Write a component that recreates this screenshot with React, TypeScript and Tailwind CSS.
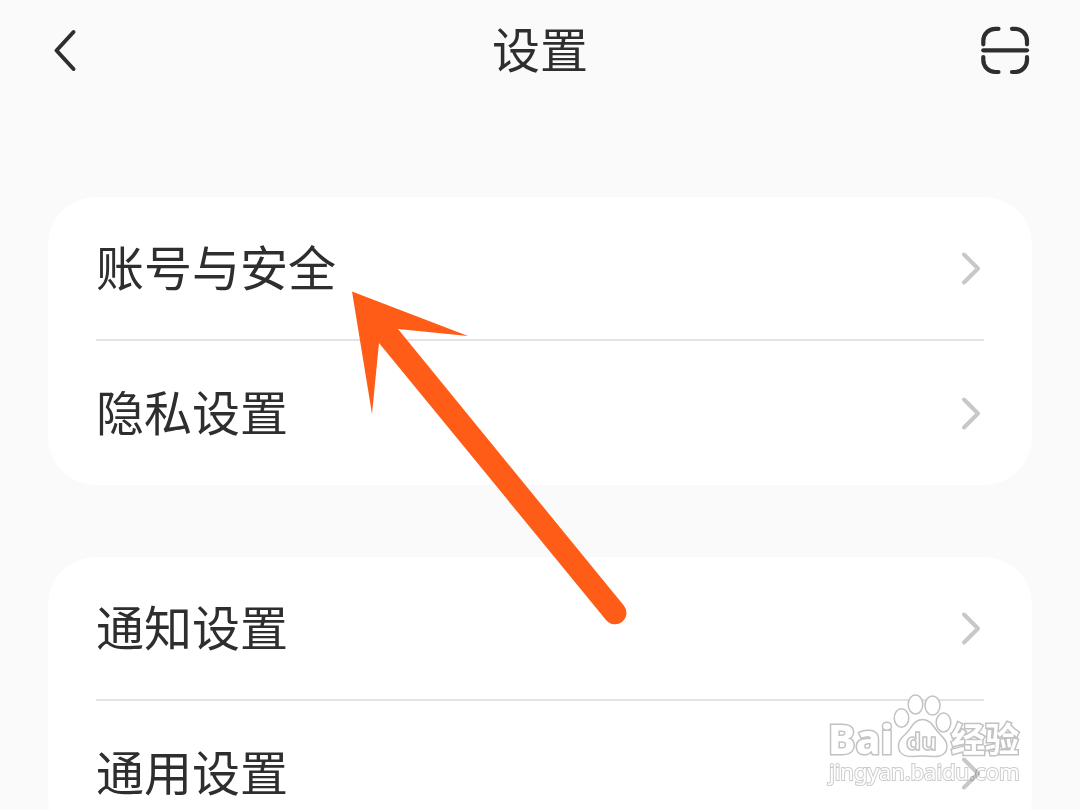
import { clsx } from "clsx";

interface SettingItem {
	id: string;
	label: string;
}

const groups: SettingItem[][] = [
	[
		{ id: "account", label: "账号与安全" },
		{ id: "privacy", label: "隐私设置" },
	],
	[
		{ id: "notice", label: "通知设置" },
		{ id: "general", label: "通用设置" },
	],
];

function ChevronRight() {
	return (
		<svg
			className="h-9 w-6 shrink-0"
			viewBox="0 0 24 36"
			fill="none"
			stroke="#c8c8c8"
			strokeWidth="4"
			strokeLinecap="round"
			strokeLinejoin="round"
			aria-hidden="true"
		>
			<path d="M4 4.500 18 18.500 4 32.500" />
		</svg>
	);
}

function Header() {
	return (
		<header className="flex h-25 items-center justify-between px-12 text-[#2e2e2e]">
			<button type="button" aria-label="返回" className="h-12 w-12">
				<svg
					className="h-12 w-12"
					viewBox="0 0 48 48"
					fill="none"
					stroke="currentColor"
					strokeWidth="4"
					strokeLinecap="round"
					strokeLinejoin="round"
					aria-hidden="true"
				>
					<path d="M25.5 6 8.5 24.5 25.5 43" />
				</svg>
			</button>
			<h1 className="pb-1.5 text-5xl">设置</h1>
			<button type="button" aria-label="扫一扫" className="h-12 w-12">
				<svg
					className="h-12 w-12 overflow-visible"
					viewBox="0 0 48 48"
					fill="none"
					stroke="currentColor"
					strokeWidth="4.2"
					strokeLinecap="round"
					aria-hidden="true"
				>
					<path d="M-.7 18.3V14.8A12 12 0 0 1 11.3 2.8H14.5" />
					<path d="M28 2.8H31A12 12 0 0 1 43 14.8V18.3" />
					<path d="M-.7 31V34A12 12 0 0 0 11.3 46H14.5" />
					<path d="M28 46H31A12 12 0 0 0 43 34V31" />
					<path d="M-.7 24.3H43" />
				</svg>
			</button>
		</header>
	);
}

function SettingGroup({ items }: { items: SettingItem[] }) {
	return (
		<ul className="rounded-[48px] bg-white px-12">
			{items.map((item, index) => (
				<li
					key={item.id}
					className={clsx(
						"h-36",
						index < items.length - 1 && "border-b-2 border-[#e3e3e3]",
					)}
				>
					<button
						type="button"
						className="flex h-full w-full items-center justify-between text-left text-5xl"
					>
						<span className="pb-1.5">{item.label}</span>
						<ChevronRight />
					</button>
				</li>
			))}
		</ul>
	);
}

/** Arrow pointing at the account row */
function PointerArrow() {
	return (
		<svg
			className="pointer-events-none absolute left-[350px] top-[290px] h-[336px] w-[280px]"
			viewBox="350 290 280 336"
			fill="#ff5d17"
			aria-hidden="true"
		>
			<path d="M352 291.5 468 336 398 329 623.8 605.6A11.3 11.3 0 0 1 606.2 620.2L379 343 372 414Z" />
		</svg>
	);
}

function Watermark() {
	return (
		<>
			<svg
				className="pointer-events-none absolute right-14 bottom-4 h-[104px] w-[200px] font-['Noto_Sans','Noto_Sans_CJK_SC',sans-serif]"
				viewBox="824 690 200 104"
				fill="#ffffff"
				stroke="#c2c2c2"
				strokeWidth="1.5"
				aria-label="Baidu 经验"
			>
				<ellipse cx="901.5" cy="718" rx="7.3" ry="9.3" />
				<ellipse cx="915.5" cy="704.5" rx="7.3" ry="9.5" />
				<ellipse cx="932.5" cy="705.5" rx="7.5" ry="9.5" />
				<ellipse cx="943.5" cy="722.5" rx="7.3" ry="9.5" />
				<path d="M922.5 719.500C915 719.500 912 726 908 731.500C903 737 897.500 740 898.500 747.500C900 757.500 909 757 922.500 756C936 757 946 758 947 747C947.500 740 941 736 937 731C933 725.500 930 719.500 922.500 719.500Z" />
				<text x="828" y="754" fontSize="41" fontWeight="800" strokeWidth="3" paintOrder="stroke">
					Bai
				</text>
				<text x="906" y="750" fontSize="24" fontWeight="700">
					du
				</text>
				<text x="951" y="752" fontSize="34" fontWeight="700" strokeWidth="3" paintOrder="stroke">
					经验
				</text>
			</svg>
			{/* multiply keeps the row chevron visible through the address */}
			<svg
				className="pointer-events-none absolute right-14 bottom-4 h-[104px] w-[200px] font-['Noto_Sans',sans-serif] mix-blend-multiply"
				viewBox="824 690 200 104"
				fill="#ffffff"
				stroke="#cccccc"
				strokeWidth="2"
				aria-label="jingyan.baidu.com"
			>
				<text x="829" y="780" fontSize="22" paintOrder="stroke">
					jingyan.baidu.com
				</text>
			</svg>
		</>
	);
}

export default function App() {
	return (
		<div className="relative h-screen overflow-hidden bg-[#fafafa] font-['Noto_Sans_CJK_SC',sans-serif] text-[#2e2e2e]">
			<Header />
			<main className="mt-[97px] flex flex-col gap-18 px-12">
				{groups.map((items) => (
					<SettingGroup key={items[0].id} items={items} />
				))}
			</main>
			<PointerArrow />
			<Watermark />
		</div>
	);
}
